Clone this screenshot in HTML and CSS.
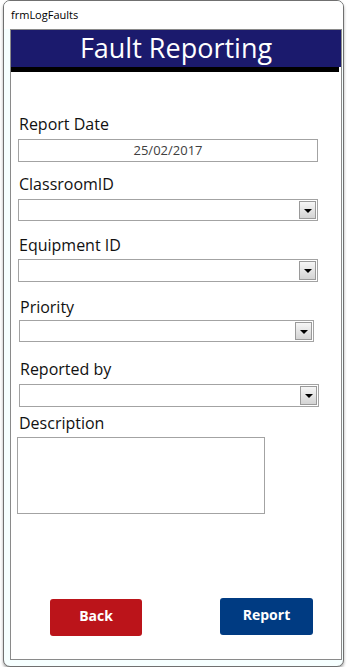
FILE: index.html
```html
<!DOCTYPE html>
<html>
<head>
<meta charset="utf-8">
<link rel="stylesheet" href="styles.css">
</head>
<body>
<div class="window">
  <div class="titlebar">frmLogFaults</div>
  <div class="panel">
    <div class="header">Fault Reporting</div>
    <div class="rule"></div>
    <div class="form">
      <div class="label lbl-date">Report Date</div>
      <div class="textbox date">25/02/2017</div>

      <div class="label lbl-class">ClassroomID</div>
      <div class="combo combo-class"><span class="dd"><span class="tri"></span></span></div>

      <div class="label lbl-equip">Equipment ID</div>
      <div class="combo combo-equip"><span class="dd"><span class="tri"></span></span></div>

      <div class="label lbl-prio">Priority</div>
      <div class="combo combo-prio"><span class="dd"><span class="tri"></span></span></div>

      <div class="label lbl-rep">Reported by</div>
      <div class="combo combo-rep"><span class="dd"><span class="tri"></span></span></div>

      <div class="label lbl-desc">Description</div>
      <div class="textbox desc"></div>

      <div class="buttons">
        <div class="btn back">Back</div>
        <div class="btn report">Report</div>
      </div>
    </div>
  </div>
</div>
</body>
</html>
```
FILE: styles.css
```css
* { box-sizing: border-box; }
html, body { margin: 0; padding: 0; background: #ffffff; }
body { font-family: "Open Sans", "Liberation Sans", sans-serif; color: #111; }

.window {
  margin-left: 3px;
  width: 341px;
  height: 667px;
  border: 1px solid #707070;
  border-radius: 7px;
  background: #f6ffff;
  box-shadow: 0 2px 3px rgba(0,0,0,0.35);
  overflow: hidden;
}
.titlebar {
  height: 28px;
  padding: 7px 0 0 7px;
  font-size: 11px;
  line-height: 14px;
  color: #000;
  background: #ffffff;
}
.panel {
  margin-left: 6px;
  width: 332px;
  height: 631px;
  border: 1px solid #8a8a8a;
  background: #ffffff;
}
.header {
  height: 37px;
  background: #1b1a6d;
  color: #ffffff;
  font-size: 27px;
  line-height: 36px;
  text-align: center;
}
.rule {
  height: 5px;
  margin-right: 2px;
  background: #000;
}
.form {
  padding-top: 42px;
  display: flex;
  flex-direction: column;
  align-items: flex-start;
}
.label {
  font-size: 16px;
  line-height: 20px;
  margin-left: 8px;
  color: #111;
}
.lbl-class { margin-top: 12px; }
.lbl-equip { margin-top: 14px; }
.lbl-prio { margin-top: 15px; margin-left: 9px; }
.lbl-rep { margin-top: 17px; margin-left: 9px; }
.lbl-desc { margin-top: 6px; }

.textbox, .combo {
  border: 1px solid #a3a3a3;
  background: #fff;
}
.date {
  margin-top: 5px;
  margin-left: 7px;
  width: 300px;
  height: 23px;
  font-size: 13px;
  line-height: 21px;
  text-align: center;
  color: #404040;
}
.combo {
  display: flex;
  justify-content: flex-end;
  align-items: stretch;
  padding: 1px;
}
.combo-class { margin-top: 5px; margin-left: 7px; width: 300px; height: 22px; }
.combo-equip { margin-top: 4px; margin-left: 7px; width: 300px; height: 23px; }
.combo-prio { margin-top: 3px; margin-left: 8px; width: 295px; height: 22px; }
.combo-rep { margin-top: 5px; margin-left: 8px; width: 300px; height: 23px; }

.dd {
  width: 17px;
  border: 1px solid #9a9a9a;
  background: linear-gradient(#f6f6f6, #d4d4d4);
  display: flex;
  align-items: center;
  justify-content: center;
}
.tri {
  width: 0;
  height: 0;
  border-left: 4px solid transparent;
  border-right: 4px solid transparent;
  border-top: 4px solid #000;
  margin-top: 1px;
}
.desc {
  margin-top: 4px;
  margin-left: 6px;
  width: 248px;
  height: 77px;
}
.buttons {
  display: flex;
  align-items: flex-start;
  margin-top: 84px;
  margin-left: 39px;
  gap: 78px;
}
.btn {
  height: 37px;
  border-radius: 3px;
  color: #ffffff;
  font-weight: 700;
  font-size: 14px;
  line-height: 34px;
  text-align: center;
}
.back { width: 92px; background: #bb141a; margin-top: 1px; }
.report { width: 93px; background: #003b82; }
```
